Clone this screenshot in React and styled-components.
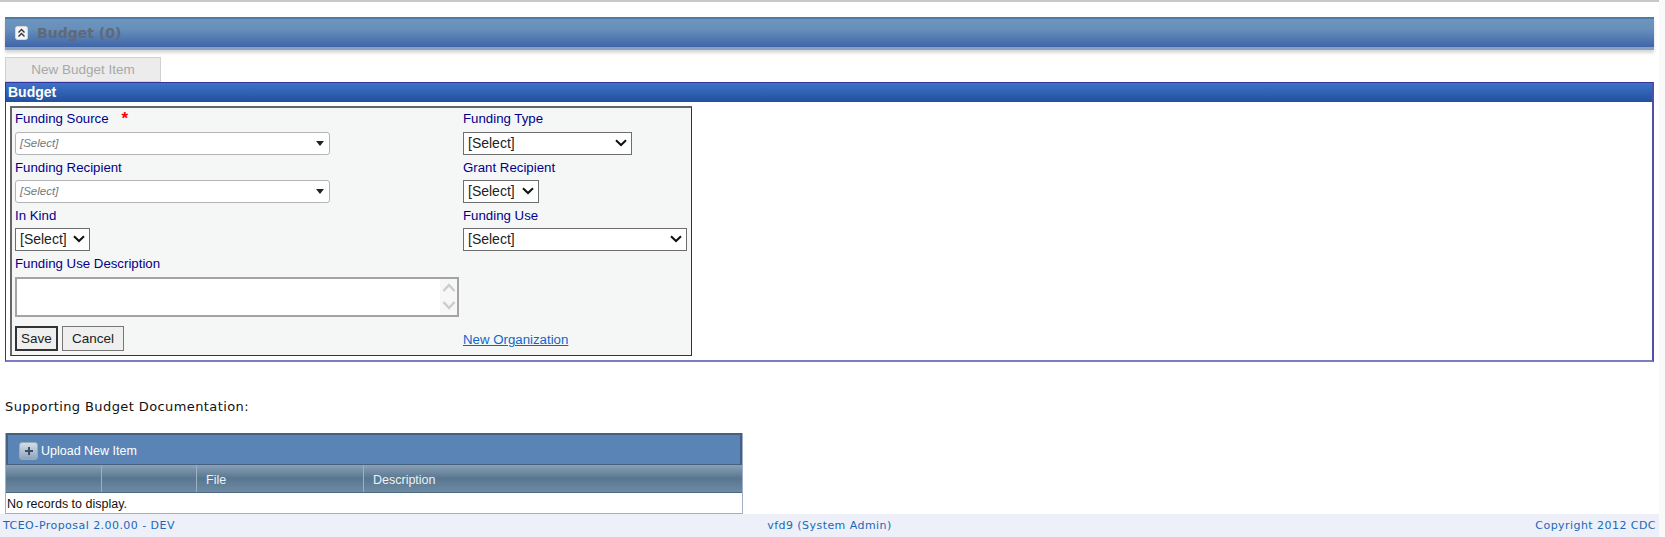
import React from "react";
import styled, { createGlobalStyle } from "styled-components";

const Global = createGlobalStyle`
  html, body { margin: 0; padding: 0; background: #f9f9f9; }
  body { font-family: "Liberation Sans", Arial, sans-serif; overflow: hidden; }
`;

const Page = styled.div`
  width: 1659px;
  height: 537px;
  background: #fff;
  display: flex;
  flex-direction: column;
  border-top: 2px solid #c8c8c8;
  box-sizing: border-box;
`;

const Content = styled.main`
  flex: 1;
  padding: 15px 5px 0;
  display: flex;
  flex-direction: column;
  min-height: 0;
`;

const SectionBar = styled.div`
  height: 33px;
  box-sizing: border-box;
  display: flex;
  align-items: center;
  gap: 9px;
  padding-left: 10px;
  border-top: 2px solid #4f7aa8;
  border-bottom: 3px solid #86a2c6;
  background: linear-gradient(#6b94bf 0%, #6890bb 35%, #3f65a8 100%);
  box-shadow: 0 3px 3px #d8d8d8;
`;

const SectionTitle = styled.span`
  font-family: "DejaVu Sans", Verdana, sans-serif;
  font-weight: 700;
  font-size: 14px;
  color: #5f6a78;
`;

const NewButton = styled.button`
  width: 156px;
  height: 25px;
  margin-top: 7px;
  padding: 0;
  font: 13.5px "Liberation Sans", Arial, sans-serif;
  color: #a8a8a8;
  background: #ececec;
  border: 1px solid #d0d0d0;
  align-self: flex-start;
`;

const Panel = styled.section`
  height: 281px;
  box-sizing: border-box;
  border: 1px solid #34349c;
  border-bottom: 2px solid #7c7cc4;
  border-right: 2px solid #5050a8;
  display: flex;
  flex-direction: column;
`;

const PanelHead = styled.div`
  height: 19px;
  padding-left: 2px;
  flex: none;
  font: 700 14px/19px "Liberation Sans", Arial, sans-serif;
  color: #fff;
  background: linear-gradient(#3f72c8, #22509f);
`;

const FormBox = styled.form`
  margin: 4px 0 0 4px;
  width: 682px;
  height: 250px;
  box-sizing: border-box;
  border: 1px solid #333;
  border-left: 2px solid #666;
  border-top: 2px solid #666;
  background: #f5f7f6;
  padding: 0 0 0 3px;
  display: grid;
  grid-template-columns: 448px 1fr;
`;

const Column = styled.div`
  display: flex;
  flex-direction: column;
  align-items: flex-start;
`;

const Label = styled.label`
  display: flex;
  gap: 13px;
  height: 24px;
  box-sizing: border-box;
  padding-bottom: ${p => (p.$first ? 2 : 0)}px;
  align-items: center;
  font-size: 13.25px;
  color: #00008b;
  white-space: nowrap;
`;

const Required = styled.span`
  color: #f00;
  font-size: 17px;
  font-weight: 700;
`;

const ComboBox = styled.div`
  width: 315px;
  height: 23px;
  box-sizing: border-box;
  border: 1px solid #b4b4b4;
  border-radius: 3px;
  background: #fff;
  display: flex;
  align-items: center;
  justify-content: space-between;
  padding: 0 5px 0 4px;
  margin-bottom: 1px;
  font-style: italic;
  font-size: 11.5px;
  color: #777;
`;

const Caret = styled.span`
  width: 0;
  height: 0;
  border-left: 4px solid transparent;
  border-right: 4px solid transparent;
  border-top: 5px solid #222;
`;

const NativeSelect = styled.div`
  width: ${p => p.$width}px;
  height: 23px;
  box-sizing: border-box;
  border: 1px solid #6e6e6e;
  background: #fff;
  display: flex;
  align-items: center;
  justify-content: space-between;
  padding: 0 4px 0 4px;
  margin-bottom: 1px;
  font-size: 14px;
  color: #222;
`;

const Chevron = () => (
  <svg width="12" height="8" viewBox="0 0 12 8" fill="none" stroke="#111" strokeWidth="2">
    <path d="M1 1.2 L6 6 L11 1.2" />
  </svg>
);

const TextBox = styled.div`
  width: 444px;
  height: 40px;
  box-sizing: border-box;
  border: 2px solid #a4a4a4;
  background: #fff;
  display: flex;
  justify-content: flex-end;
  margin-top: 1px;
`;

const ScrollTrack = styled.div`
  width: 17px;
  display: flex;
  flex-direction: column;
  align-items: center;
  justify-content: center;
  gap: 9px;
  background: #f7f7f7;
`;

const ButtonRow = styled.div`
  display: flex;
  gap: 4px;
  margin-top: 9px;
`;

const ActionButton = styled.button`
  height: 25px;
  width: ${p => p.$width}px;
  padding: 0;
  box-sizing: border-box;
  font: 13.5px "Liberation Sans", Arial, sans-serif;
  color: #222;
  background: #efefef;
  border: ${p => (p.$primary ? "2px solid #333" : "1px solid #777")};
`;

const OrgLink = styled.a`
  margin-top: auto;
  margin-bottom: 8px;
  font-size: 13.25px;
  color: #0f66c8;
  text-decoration: underline;
`;

const DocsLabel = styled.div`
  margin-top: 37px;
  font: 13px "DejaVu Sans", Verdana, sans-serif;
  letter-spacing: 0.4px;
  color: #111;
  height: 16px;
`;

const Grid = styled.div`
  width: 738px;
  margin-top: 18px;
  box-sizing: border-box;
  border: 1px solid #9fb0c6;
  border-top: 0;
  display: flex;
  flex-direction: column;
`;

const GridToolbar = styled.div`
  height: 32px;
  box-sizing: border-box;
  background: #5a84b6;
  border-top: 2px solid #46607f;
  border-left: 2px solid #46607f;
  border-right: 2px solid #46607f;
  border-bottom: 1px solid #46607f;
  display: flex;
  align-items: center;
  padding: 2px 0 0 11px;
  gap: 3px;
  color: #fff;
  font-size: 12.5px;
`;

const PlusIcon = styled.span`
  width: 19px;
  height: 18px;
  border-radius: 3px;
  background: linear-gradient(#d2dde8, #8fa5bd);
  border: 1px solid #9ab;
  box-sizing: border-box;
  display: flex;
  align-items: center;
  justify-content: center;
`;

const GridHeader = styled.div`
  height: 28px;
  display: grid;
  grid-template-columns: 96px 95px 167px 1fr;
  background: linear-gradient(#8aa0b6 0%, #587690 50%, #6f8ba4 100%);
  border-bottom: 1px solid #4d6a85;
  box-sizing: border-box;
`;

const HeadCell = styled.div`
  display: flex;
  align-items: center;
  padding: 2px 0 0 9px;
  color: #eef2f6;
  font-size: 12.5px;
  border-right: 1px solid #9ab0c4;
  &:last-child { border-right: 0; }
`;

const EmptyRow = styled.div`
  height: 20px;
  box-sizing: border-box;
  padding: 3px 0 0 1px;
  line-height: 17px;
  font-size: 12.5px;
  color: #111;
`;

const Footer = styled.footer`
  height: 23px;
  flex: none;
  background: #edf0f8;
  display: grid;
  grid-template-columns: 1fr auto 1fr;
  align-items: center;
  padding: 0 3px;
  font: 11px "DejaVu Sans", Verdana, sans-serif;
  letter-spacing: 0.45px;
  color: #1a68b8;
`;

const FooterEnd = styled.span`
  justify-self: end;
`;

const App = () => (
  <>
    <Global />
    <Page>
      <Content>
        <SectionBar>
          <svg width="13" height="14" viewBox="0 0 13 14" fill="none">
            <rect x="0.5" y="0.5" width="12" height="13" rx="2" fill="#f2f4f6" stroke="#cfd6de" />
            <path d="M3.5 6.5 L6.5 3.5 L9.5 6.5 M3.5 10.5 L6.5 7.5 L9.5 10.5" stroke="#333" strokeWidth="1.4" />
          </svg>
          <SectionTitle>Budget (0)</SectionTitle>
        </SectionBar>
        <NewButton type="button" disabled>New Budget Item</NewButton>
        <Panel>
          <PanelHead>Budget</PanelHead>
          <FormBox>
            <Column>
              <Label $first>Funding Source <Required>*</Required></Label>
              <ComboBox>[Select]<Caret /></ComboBox>
              <Label>Funding Recipient</Label>
              <ComboBox>[Select]<Caret /></ComboBox>
              <Label>In Kind</Label>
              <NativeSelect $width={75}>[Select]<Chevron /></NativeSelect>
              <Label>Funding Use Description</Label>
              <TextBox>
                <ScrollTrack>
                  <svg width="14" height="9" viewBox="0 0 14 9" fill="none" stroke="#cccccc" strokeWidth="2.5"><path d="M1.5 8 L7 2 L12.5 8" /></svg>
                  <svg width="14" height="9" viewBox="0 0 14 9" fill="none" stroke="#cccccc" strokeWidth="2.5"><path d="M1.5 1 L7 7 L12.5 1" /></svg>
                </ScrollTrack>
              </TextBox>
              <ButtonRow>
                <ActionButton type="button" $primary $width={43}>Save</ActionButton>
                <ActionButton type="button" $width={62}>Cancel</ActionButton>
              </ButtonRow>
            </Column>
            <Column>
              <Label $first>Funding Type</Label>
              <NativeSelect $width={169}>[Select]<Chevron /></NativeSelect>
              <Label>Grant Recipient</Label>
              <NativeSelect $width={76}>[Select]<Chevron /></NativeSelect>
              <Label>Funding Use</Label>
              <NativeSelect $width={224}>[Select]<Chevron /></NativeSelect>
              <OrgLink href="#">New Organization</OrgLink>
            </Column>
          </FormBox>
        </Panel>
        <DocsLabel>Supporting Budget Documentation:</DocsLabel>
        <Grid>
          <GridToolbar>
            <PlusIcon>
              <svg width="10" height="10" viewBox="0 0 10 10"><path d="M5 1 V9 M1 5 H9" stroke="#3c4f63" strokeWidth="2" /></svg>
            </PlusIcon>
            Upload New Item
          </GridToolbar>
          <GridHeader>
            <HeadCell />
            <HeadCell />
            <HeadCell>File</HeadCell>
            <HeadCell>Description</HeadCell>
          </GridHeader>
          <EmptyRow>No records to display.</EmptyRow>
        </Grid>
      </Content>
      <Footer>
        <span>TCEO-Proposal 2.00.00 - DEV</span>
        <span>vfd9 (System Admin)</span>
        <FooterEnd>Copyright 2012 CDC</FooterEnd>
      </Footer>
    </Page>
  </>
);

export default App;
